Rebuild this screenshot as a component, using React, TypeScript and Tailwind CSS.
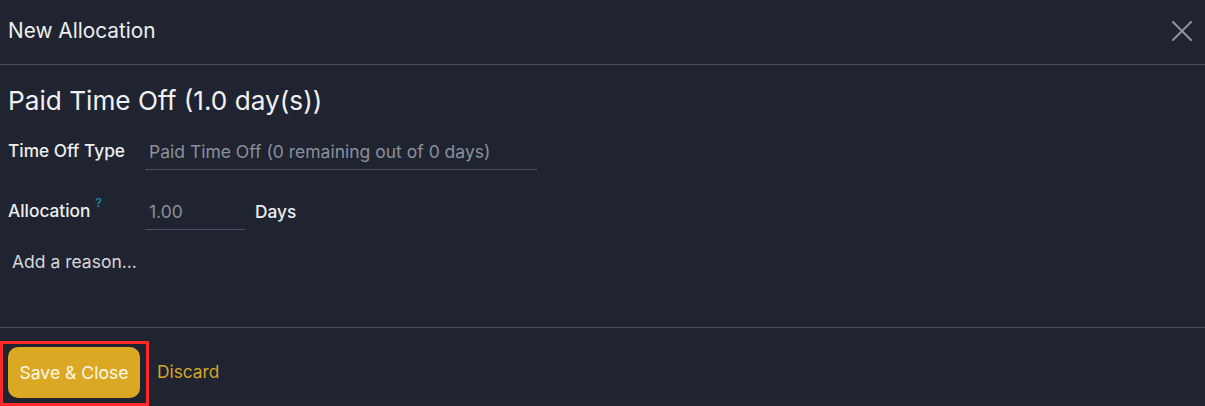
import React from "react";

export default function App() {
  return (
    <div
      className="w-[1205px] h-[406px] bg-[#1f2430] text-[#e8e9ec] overflow-hidden flex flex-col"
      style={{ fontFamily: "Inter, 'Noto Sans', sans-serif" }}
    >
      <div className="h-[65px] shrink-0 flex items-center justify-between pl-2 pr-[13px] pb-[3px] border-b border-[#4a4f5c]">
        <div className="text-[20.8px] font-normal text-[#eceef0]">New Allocation</div>
        <svg width="20" height="20" viewBox="0 0 20 20" className="mt-[1px]">
          <path d="M1 1 L19 19 M19 1 L1 19" stroke="#8e929b" strokeWidth="2" strokeLinecap="square" />
        </svg>
      </div>
      <div className="flex-1 px-2 pt-[20px] border-b border-[#4a4f5c]">
        <div className="text-[26.2px] leading-[32px] text-[#f0f1f3]">Paid Time Off (1.0 day(s))</div>
        <div className="flex items-start mt-[23px]">
          <div className="w-[137px] text-[17.3px] leading-[24px] font-medium text-[#eceef0] -mt-[1px]">Time Off Type</div>
          <div className="w-[392px] border-b border-[#4a5060] pb-[5px] pl-[4px] text-[17.5px] leading-[24px] text-[#8a909c]">
            Paid Time Off (0 remaining out of 0 days)
          </div>
        </div>
        <div className="flex items-start mt-[30px]">
          <div className="w-[137px] text-[17.3px] leading-[24px] font-medium text-[#eceef0] -mt-[1px] flex items-start">
            Allocation
            <span className="text-[12px] leading-[12px] text-[#1f8fb0] ml-[5px] mt-[-2px]">?</span>
          </div>
          <div className="w-[100px] border-b border-[#4a5060] pb-[5px] pl-[4px] text-[17.5px] leading-[24px] text-[#8a909c]">1.00</div>
          <div className="ml-[10px] text-[17.3px] leading-[24px] font-medium text-[#eceef0]">Days</div>
        </div>
        <div className="mt-[20px] pl-[4px] text-[17.5px] leading-[24px] text-[#d6d8dc]">Add a reason...</div>
      </div>
      <div className="h-[78px] shrink-0 flex items-end">
        <div className="border-[3px] border-[#ff2a2a] pl-[5px] pr-[6px] pt-[3px] pb-[4px] h-[65px]">
          <button className="w-[132px] h-[51px] rounded-[10px] bg-[#dba824] text-[#fbf7ea] text-[17.6px] font-normal pt-[1px]">
            Save &amp; Close
          </button>
        </div>
        <div className="ml-[8px] mb-[21px] text-[17.3px] font-normal text-[#d6a62a]">Discard</div>
      </div>
    </div>
  );
}
